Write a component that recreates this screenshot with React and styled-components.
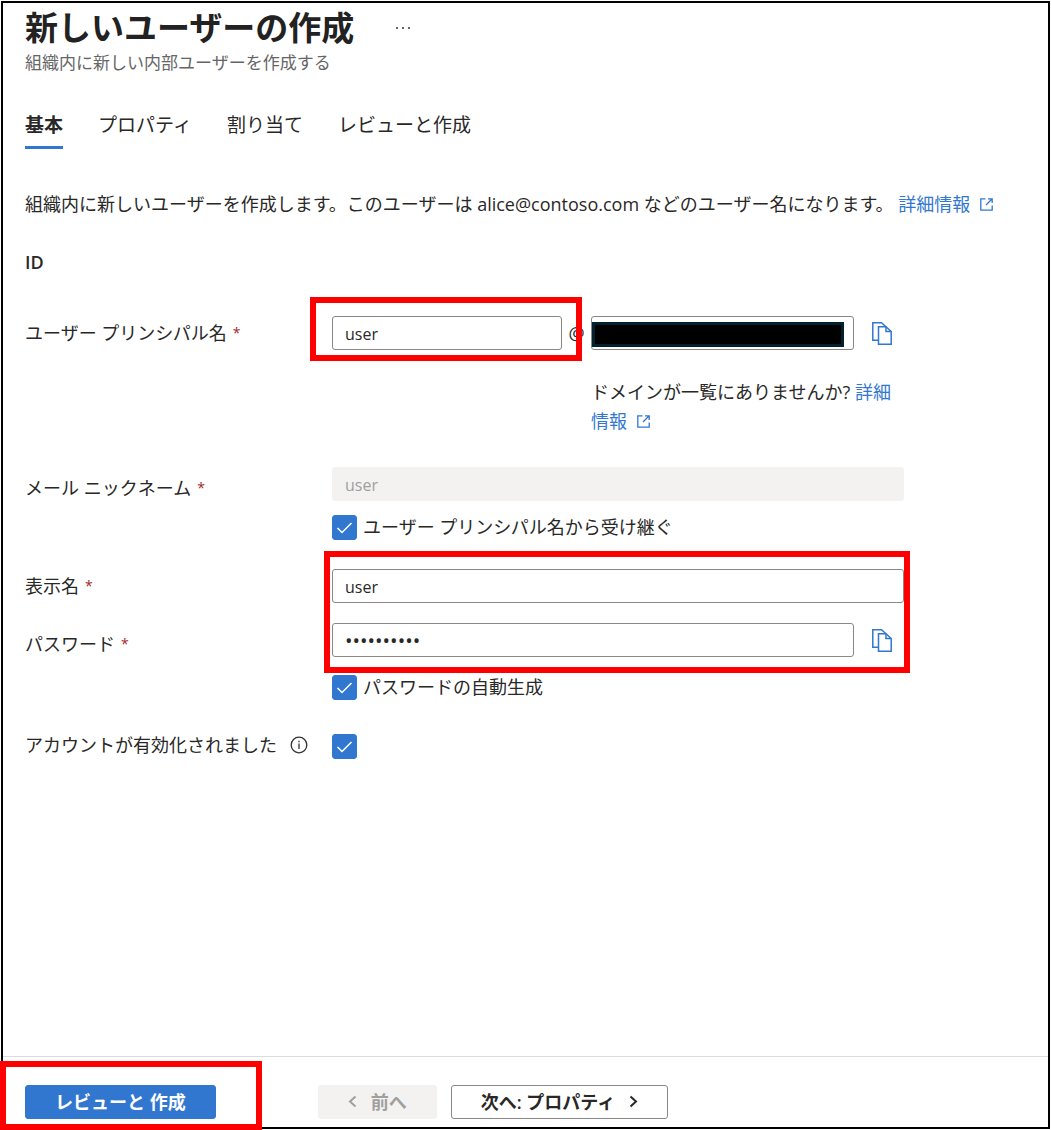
import styled, { createGlobalStyle } from "styled-components";

const BLUE = "#3277cf";
const FONT = `"Open Sans", "Noto Sans CJK JP", sans-serif`;

const GlobalStyle = createGlobalStyle`
    * { box-sizing: border-box; }
    body {
        margin: 0;
        background-color: white;
        color: #292827;
        font-family: ${FONT};
        font-size: 18px; line-height: 28px;
    }
    button, input, select { font-family: inherit; font-size: inherit; color: inherit; }
`;

const Page = styled.div`
    min-height: 100vh;
    padding: 1px;
    display: flex;
    overflow: hidden;
`;
const Frame = styled.div`
    flex: 1; min-width: 0;
    display: flex; flex-direction: column;
    border: 2px solid black;
`;
const Main = styled.main`
    flex: 1;
    padding: 3px 22px 40px;
`;

/* header */
const TitleRow = styled.div`
    display: flex; align-items: center;
    gap: 40px;
    h1 {
        margin: 0;
        font-size: 33px; line-height: 44px; font-weight: bold;
        color: #222;
    }
`;
const SubTitle = styled.p`
    margin: 0;
    font-size: 17px; line-height: 26px;
    color: #666;
`;
const IconButton = styled.button`
    display: flex; align-items: center;
    padding: 0;
    border: 0;
    background: none;
    cursor: pointer;
`;
const Tabs = styled.div`
    display: flex;
    gap: 35px;
    margin-top: 35px;
`;
const Tab = styled.button`
    padding: 0 0 7px;
    border: 0;
    border-bottom: 3px solid ${({$active}) => $active ? BLUE : "transparent"};
    background: none;
    font-size: 19px; line-height: 28px;
    font-weight: ${({$active}) => $active ? "bold" : "normal"};
    cursor: pointer;
`;
const Description = styled.p`
    margin: 41px 0 0;
`;
const Link = styled.a`
    color: ${BLUE};
    text-decoration: none;
    svg { margin-left: 10px; }
`;
const SectionTitle = styled.h2`
    margin: 30px 0 40px;
    font-size: 18px; line-height: 28px; font-weight: 600;
`;

/* form */
const Row = styled.div`
    display: grid;
    grid-template-columns: 307px minmax(0, 572px);
    align-items: start;
    margin-bottom: ${({$gap}) => $gap || 0}px;
`;
const Label = styled.label`
    display: flex; align-items: center;
    gap: ${({$info}) => $info ? 13 : 6}px;
    line-height: ${({$info}) => $info ? 22 : 34}px;
    padding-top: ${({$low}) => $low ? 4 : 0}px;
    span { color: #a4262c; font-size: 14px; }
`;
const Field = styled.div`
    position: relative;
`;
const Line = styled.div`
    display: flex; align-items: flex-start;
`;
const TextBox = styled.input`
    display: block;
    width: 100%; height: 34px;
    padding: 1px 12px 0;
    border: 1px solid #8a8886;
    border-radius: 3px;
    background-color: white;
    font-size: 16px;
    outline: none;
    &:disabled {
        border-color: #f3f2f1;
        background-color: #f3f2f1;
        color: #a19f9d;
    }
    &[type="password"] { font-size: 20px; }
`;
const NameBox = styled.div`
    position: relative;
    flex: 0 1 230px;
`;
const At = styled.span`
    flex: 0 0 29px;
    line-height: 34px;
    text-align: center;
`;
const Domain = styled.div`
    flex: 1; min-width: 0;
`;
const SelectBox = styled.div`
    position: relative;
    flex: 1; min-width: 0;
`;
const Select = styled.select`
    display: block;
    appearance: none;
    width: 100%; height: 34px;
    border: 1px solid #8a8886;
    border-radius: 3px;
    background-color: white;
`;
const Mask = styled.div`
    position: absolute;
    inset: 6px 10px 3px 1px;
    border: 3px solid #04202e;
    background-color: black;
    pointer-events: none;
`;
const CopyButton = styled(IconButton)`
    flex: 0 0 50px;
    height: 34px;
    justify-content: center;
    padding-left: 6px;
`;
const Hint = styled.p`
    margin: 28px 0 0;
    line-height: 29px;
`;
const CheckLine = styled.label`
    display: flex; align-items: center;
    gap: 6px;
    margin-top: ${({$top}) => $top || 0}px;
    line-height: 25px;
`;
const CheckBox = styled.span`
    display: grid;
    width: 25px; height: 25px;
    input, svg { grid-area: 1 / 1; }
    input {
        appearance: none;
        width: 25px; height: 25px;
        margin: 0;
        border: 1px solid ${BLUE};
        border-radius: 3px;
    }
    input:checked { background-color: ${BLUE}; }
    input:not(:checked) + svg { visibility: hidden; }
    svg { pointer-events: none; }
`;
const RedBox = styled.div`
    position: absolute;
    inset: ${({$inset}) => $inset};
    border: 6px solid red;
    pointer-events: none;
    z-index: 1;
`;

/* footer */
const Footer = styled.footer`
    display: flex;
    padding: 28px 22px 8px;
    border-top: 1px solid #dcdcdc;
`;
const Primary = styled.div`
    position: relative;
    margin-right: 102px;
`;
const Button = styled.button`
    display: flex; align-items: center; justify-content: center;
    gap: 14px;
    height: 34px;
    padding: 0 29px 2px;
    border: 1px solid #8a8886;
    border-radius: 3px;
    background-color: white;
    font-weight: 600;
    cursor: pointer;
    ${({$primary}) => $primary && `
        border-color: ${BLUE};
        background-color: ${BLUE};
        color: white;
    `}
    &:disabled {
        margin-right: 14px;
        border-color: #f3f2f1;
        background-color: #f3f2f1;
        color: #a19f9d;
        cursor: default;
    }
`;

const CopyIcon = () => (
    <svg width="20" height="23" viewBox="0 0 20 23" fill="none" stroke={BLUE} strokeWidth="1.5">
        <path d="M6.5 18.2H.8V.8H9.5L14 4.8" />
        <path d="M6.5 4.8H14L19.2 9.5V22.2H6.5Z" />
        <path d="M14 4.8V9.5H19.2" />
    </svg>
);
const ExternalIcon = () => (
    <svg width="13" height="13" viewBox="0 0 13 13" fill="none" stroke={BLUE} strokeWidth="1.3">
        <path d="M5.5 .8H.8V12.2H12.2V7.5" />
        <path d="M8 .8H12.2V5M12.2 .8L6 7" />
    </svg>
);
const InfoIcon = () => (
    <svg width="18" height="18" viewBox="0 0 18 18" fill="none" stroke="#333" strokeWidth="1.3">
        <circle cx="9" cy="9" r="7.8" />
        <path d="M9 7.5V13M9 4.8V6.2" />
    </svg>
);
const Chevron = ({right}) => (
    <svg width="9" height="13" viewBox="0 0 9 13" fill="none" stroke="currentColor" strokeWidth="2">
        <path d={right ? "M1.5 1.5L7 6.5L1.5 11.5" : "M7.5 1.5L2 6.5L7.5 11.5"} />
    </svg>
);

const Check = ({id}) => (
    <CheckBox>
        <input type="checkbox" id={id} defaultChecked />
        <svg width="25" height="25" viewBox="0 0 25 25" fill="none" stroke="white" strokeWidth="1.5">
            <path d="M5.5 13L10 17.5L19.5 8" />
        </svg>
    </CheckBox>
);

const tabs = ["基本", "プロパティ", "割り当て", "レビューと作成"];

const App = () => {
    return (<>
    <GlobalStyle />
    <Page>
        <Frame>
            <Main>
                <TitleRow>
                    <h1>新しいユーザーの作成</h1>
                    <IconButton aria-label="その他">
                        <svg width="18" height="4" viewBox="0 0 18 4" fill="#444">
                            <circle cx="3" cy="2" r="1.1" />
                            <circle cx="9" cy="2" r="1.1" />
                            <circle cx="15" cy="2" r="1.1" />
                        </svg>
                    </IconButton>
                </TitleRow>
                <SubTitle>組織内に新しい内部ユーザーを作成する</SubTitle>
                <Tabs role="tablist">
                    {tabs.map((t, i) =>
                        <Tab key={t} role="tab" aria-selected={i === 0} $active={i === 0}>{t}</Tab>
                    )}
                </Tabs>
                <Description>
                    組織内に新しいユーザーを作成します。このユーザーは alice@contoso.com などのユーザー名になります。{" "}
                    <Link href="#">詳細情報<ExternalIcon /></Link>
                </Description>
                <SectionTitle>ID</SectionTitle>

                <Row $gap={31}>
                    <Label htmlFor="upn">ユーザー プリンシパル名<span>*</span></Label>
                    <Line>
                        <NameBox>
                            <TextBox id="upn" defaultValue="user" />
                            <RedBox $inset="-19px -20px -11px -22px" />
                        </NameBox>
                        <At>@</At>
                        <Domain>
                            <Line>
                                <SelectBox>
                                    <Select aria-label="ドメイン" />
                                    <Mask />
                                </SelectBox>
                                <CopyButton aria-label="コピー"><CopyIcon /></CopyButton>
                            </Line>
                            <Hint>ドメインが一覧にありませんか? <Link href="#">詳細情報<ExternalIcon /></Link></Hint>
                        </Domain>
                    </Line>
                </Row>
                <Row $gap={29}>
                    <Label htmlFor="nick" $low>メール ニックネーム<span>*</span></Label>
                    <Field>
                        <TextBox id="nick" defaultValue="user" disabled />
                        <CheckLine $top={14}><Check />ユーザー プリンシパル名から受け継ぐ</CheckLine>
                    </Field>
                </Row>
                <Row $gap={20}>
                    <Label htmlFor="display">表示名<span>*</span></Label>
                    <Field>
                        <TextBox id="display" defaultValue="user" />
                        <RedBox $inset="-18px -6px -70px -8px" />
                    </Field>
                </Row>
                <Row $gap={34}>
                    <Label htmlFor="pw" $low>パスワード<span>*</span></Label>
                    <Field>
                        <Line>
                            <TextBox id="pw" type="password" defaultValue="abcdefghij" />
                            <CopyButton aria-label="コピー"><CopyIcon /></CopyButton>
                        </Line>
                        <CheckLine $top={18}><Check />パスワードの自動生成</CheckLine>
                    </Field>
                </Row>
                <Row>
                    <Label htmlFor="enabled" $info>アカウントが有効化されました<InfoIcon /></Label>
                    <Check id="enabled" />
                </Row>
            </Main>
            <Footer>
                <Primary>
                    <Button $primary>レビューと 作成</Button>
                    <RedBox $inset="-24px -46px -11px -25px" />
                </Primary>
                <Button disabled><Chevron />前へ</Button>
                <Button>次へ: プロパティ<Chevron right /></Button>
            </Footer>
        </Frame>
    </Page>
    </>)
}
export default App;
